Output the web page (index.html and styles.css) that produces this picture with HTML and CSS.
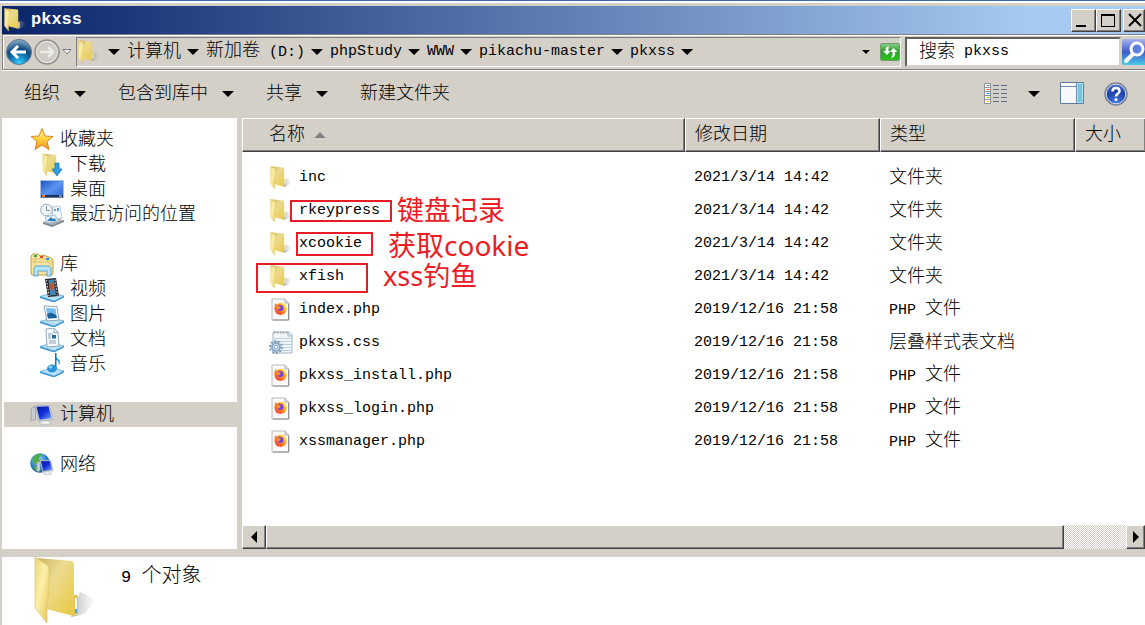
FILE: index.html
```
<!DOCTYPE html>
<html lang="zh-CN">
<head>
    <meta charset="UTF-8">
    <meta name="viewport" content="width=device-width, initial-scale=1.0">
    <title>pkxss</title>
    <link rel="stylesheet" href="styles.css">
</head>
<body>
    <!-- icons used more than once -->
    <svg class="defs" aria-hidden="true">
        <defs>
            <linearGradient id="g-front" x1="0" x2="1" y1="0" y2="1">
                <stop offset="0" stop-color="#eed67a"/><stop offset=".45" stop-color="#fcf0a8"/><stop offset="1" stop-color="#e3c04c"/>
            </linearGradient>
            <linearGradient id="g-back" x1="0" x2="1" y1="0" y2="1">
                <stop offset="0" stop-color="#cbb162"/><stop offset=".4" stop-color="#ecdb90"/><stop offset="1" stop-color="#e8c840"/>
            </linearGradient>
            <linearGradient id="g-shadow">
                <stop offset="0" stop-color="#888" stop-opacity=".6"/><stop offset="1" stop-color="#bbb" stop-opacity="0"/>
            </linearGradient>
            <linearGradient id="g-screen" x1="0" x2="1" y1="0" y2="1">
                <stop offset="0" stop-color="#0a1a9c"/><stop offset=".5" stop-color="#1030d8"/><stop offset="1" stop-color="#7fa8f8"/>
            </linearGradient>
            <linearGradient id="g-desk" x1="0" x2="1" y1="0" y2="1">
                <stop offset="0" stop-color="#1c50c0"/><stop offset=".5" stop-color="#5a94ee"/><stop offset="1" stop-color="#2a62cf"/>
            </linearGradient>
            <linearGradient id="g-star" x1="0" x2="0" y1="0" y2="1">
                <stop offset="0" stop-color="#fff0a0"/><stop offset=".5" stop-color="#ffd23e"/><stop offset="1" stop-color="#f58a1c"/>
            </linearGradient>
            <linearGradient id="g-fox" x1="1" x2="0" y1="0" y2="1">
                <stop offset="0" stop-color="#ffe03a"/><stop offset=".5" stop-color="#ff8a1e"/><stop offset="1" stop-color="#f0264e"/>
            </linearGradient>
            <radialGradient id="g-back-btn" cx=".5" cy=".95" r=".9">
                <stop offset="0" stop-color="#2fd4ff"/><stop offset=".4" stop-color="#1178b4"/><stop offset=".65" stop-color="#0f4a80"/><stop offset="1" stop-color="#7fa4c4"/>
            </radialGradient>
            <linearGradient id="g-refresh" x1="0" x2="0" y1="0" y2="1">
                <stop offset="0" stop-color="#8fd28a"/><stop offset=".45" stop-color="#2f9e2e"/><stop offset="1" stop-color="#2cc41c"/>
            </linearGradient>
            <linearGradient id="g-find" x1="0" x2="0" y1="0" y2="1">
                <stop offset="0" stop-color="#a8b4ee"/><stop offset=".5" stop-color="#3c5cc8"/><stop offset="1" stop-color="#4cc8e8"/>
            </linearGradient>
            <radialGradient id="g-globe" cx=".4" cy=".3" r=".8">
                <stop offset="0" stop-color="#a8dcf0"/><stop offset=".5" stop-color="#2f86cc"/><stop offset="1" stop-color="#0c3c8c"/>
            </radialGradient>
            <radialGradient id="g-help" cx=".5" cy=".9" r=".9">
                <stop offset="0" stop-color="#4a7ee0"/><stop offset=".6" stop-color="#1b3fa8"/><stop offset="1" stop-color="#5a7ccc"/>
            </radialGradient>
            <symbol id="i-folder" viewBox="0 0 64 68">
                <path d="M38 60 47 35 64 43 52 56 44 59z" fill="url(#g-shadow)"/>
                <path d="M4 1 39 4Q41 5 41 7V59L13 52z" fill="url(#g-back)"/>
                <path d="M41 38h3q1 0 1 2v16l-4 3z" fill="#e2c655"/>
                <path d="M42 41h2v14h-2z" fill="#f6faff"/>
                <path d="M42 52h2v4h-2z" fill="#5aa0e8"/>
                <path d="M2 0 14 8Q16 9 16 11V39L14 42V66L3 52Q2 51 2 49z" fill="url(#g-front)" stroke="#dabf62" stroke-width=".6"/>
            </symbol>
            <symbol id="i-php" viewBox="1 1 24 24">
                <path d="M4 2h13l4 4v17H4z" fill="#fafafa" stroke="#b8b8b8"/>
                <path d="M20.500 7v16H5" fill="none" stroke="#8f8f8f"/>
                <path d="M17 2v4h4" fill="#e4e4e4" stroke="#b0b0b0"/>
                <circle cx="12.500" cy="12" r="6" fill="url(#g-fox)"/>
                <path d="M6.500 12 7 6 9.500 8.500 12 6.500 12 9z" fill="#ff7a24"/>
                <path d="M14 5.500Q19 8 18.500 13L16 10z" fill="#ffd83a"/>
                <circle cx="12.500" cy="11" r="3" fill="#7542d8"/>
                <path d="M9 9 13 9.500 11.500 12 9.500 12.500z" fill="#ff9a2a"/>
            </symbol>
            <symbol id="i-tray" viewBox="0 0 24 24">
                <path d="M0 18.500 12 15 24 18 14 23z" fill="#b9e2f8" stroke="#5fabda" stroke-width=".8"/>
                <path d="M0 18.500V20L14 24.500 24 19.500V18L14 23z" fill="#3a95d2"/>
            </symbol>
            <symbol id="i-pc" viewBox="1 2 22 22">
                <path d="M2 7 6 5v12l-4 1z" fill="#c8ccd2" stroke="#8c9098" stroke-width=".6"/>
                <ellipse cx="15" cy="20" rx="5" ry="2" fill="#eceef0" stroke="#a4a8ae" stroke-width=".6"/>
                <path d="M6 4.500 19 4 22 17 9 18.500z" fill="#dfe3e8" stroke="#9ba1aa" stroke-width=".6"/>
                <path d="M7 5.500 18 5 20.800 16 9.800 17.300z" fill="url(#g-screen)"/>
            </symbol>
        </defs>
    </svg>

    <div class="window">
        <header class="titlebar">
            <svg class="icon"><use href="#i-folder"/></svg>
            <h1>pkxss</h1>
            <div class="window-buttons">
                <button class="win-btn" aria-label="最小化">
                    <svg viewBox="0 0 20 18"><path d="M3 14h10v2H3z"/></svg>
                </button>
                <button class="win-btn" aria-label="最大化">
                    <svg viewBox="0 0 20 18"><path d="M3 3h14v13H3zM4 5v10h12V5z" fill-rule="evenodd"/></svg>
                </button>
                <button class="win-btn close" aria-label="关闭">
                    <svg viewBox="0 0 20 18"><path d="M4 3 16 15M16 3 4 15" stroke="#000" stroke-width="2"/></svg>
                </button>
            </div>
        </header>

        <nav class="navbar">
            <div class="travel">
                <button aria-label="后退">
                    <svg viewBox="0 0 26 26"><circle cx="13" cy="13" r="12.500" fill="url(#g-back-btn)" stroke="#5c7488"/><path d="M12 7 6 13l6 6M6.500 13H20" fill="none" stroke="#fff" stroke-width="3"/></svg>
                </button>
                <button aria-label="前进">
                    <svg viewBox="0 0 26 26"><circle cx="13" cy="13" r="12" fill="#cfccc6" stroke="#8d8d8d" stroke-width="1.500"/><circle cx="13" cy="13" r="10.500" fill="none" stroke="#e8e6e2"/><path d="M14 8l5 5-5 5M19 13H6" fill="none" stroke="#eeece8" stroke-width="2.500"/></svg>
                </button>
                <button class="recent" aria-label="最近浏览">
                    <svg viewBox="0 0 10 8"><path d="M1 1.500h8L5 6z" fill="#fff" stroke="#777"/></svg>
                </button>
            </div>
            <div class="address">
                <svg class="icon"><use href="#i-folder"/></svg>
                <button class="arrow" aria-label="展开"></button>
                <a href="#" class="zh">计算机</a>
                <button class="arrow" aria-label="展开"></button>
                <a href="#" class="zh">新加卷<span class="en"> (D:)</span></a>
                <button class="arrow" aria-label="展开"></button>
                <a href="#">phpStudy</a>
                <button class="arrow" aria-label="展开"></button>
                <a href="#">WWW</a>
                <button class="arrow" aria-label="展开"></button>
                <a href="#">pikachu-master</a>
                <button class="arrow" aria-label="展开"></button>
                <a href="#">pkxss</a>
                <button class="arrow" aria-label="展开"></button>
                <button class="arrow small history" aria-label="历史记录"></button>
                <button class="refresh" aria-label="刷新">
                    <svg viewBox="0 0 20 18"><rect x=".5" y=".5" width="19" height="17" rx="1.500" fill="url(#g-refresh)" stroke="#6f9a70"/><path d="M9 3Q5 4 5.500 8H3l4 4 3.500-4H8.500Q8 5 9 3zM11 15q5-1 4-6h2.500L13.500 5 10 9h2.500q.5 4-1.500 6z" fill="#fff"/></svg>
                </button>
            </div>
            <label class="search">
                <span class="zh">搜索</span>
                <input type="text" value="pkxss">
            </label>
            <button class="find" aria-label="搜索">
                <svg viewBox="0 0 26 26"><rect width="26" height="26" rx="2" fill="url(#g-find)"/><path d="M11 15 4 22" stroke="#fff" stroke-width="4" stroke-linecap="round"/><circle cx="15" cy="10" r="6" fill="#5a80dc" stroke="#fff" stroke-width="3"/></svg>
            </button>
        </nav>

        <div class="toolbar zh">
            <button class="tool">组织<span class="arrow"></span></button>
            <button class="tool">包含到库中<span class="arrow"></span></button>
            <button class="tool">共享<span class="arrow"></span></button>
            <button class="tool">新建文件夹</button>
            <div class="view-tools">
                <button aria-label="更改视图">
                    <svg class="icon" viewBox="0 0 24 24">
                        <path d="M.5 1.500h6v20h-6zM.5 5.500h6M.5 9.500h6M.5 13.500h6M.5 17.500h6" fill="#fff" stroke="#8b919c"/>
                        <path d="M2.500 3.500h3" stroke="#4e9a58"/><path d="M2.500 7.500h3" stroke="#e04040"/><path d="M2.500 11.500h3" stroke="#3a90e0"/><path d="M2.500 15.500h3" stroke="#8cc030"/><path d="M2.500 19.500h3" stroke="#f0c020"/>
                        <path d="M9 3.500h6M17 3.500h6M9 7.500h6M17 7.500h6M9 11.500h6M17 11.500h6M9 15.500h6M17 15.500h6M9 19.500h6M17 19.500h6" stroke="#5a6e92"/>
                    </svg>
                </button>
                <button class="arrow" aria-label="更多选项"></button>
                <button aria-label="预览窗格">
                    <svg class="icon" viewBox="0 0 24 24"><path d="M.5 .5h23v21H.5z" fill="#f7f8fb" stroke="#5c7ca4"/><path d="M1 4.500h15M16.500 1v20" stroke="#6b89b0"/><path d="M17.500 1.500h5v19h-5z" fill="#79c3dc" stroke="#a8e6f4"/></svg>
                </button>
                <button aria-label="帮助">
                    <svg class="icon" viewBox="0 0 24 24"><circle cx="12" cy="12" r="11" fill="url(#g-help)" stroke="#7d8794" stroke-width="1.500"/><circle cx="12" cy="12" r="9.800" fill="none" stroke="#d5dcec"/><path d="M8.500 9.500Q8.500 6 12 6t3.500 3q0 2-2 3-1.500 1-1.500 2.500" fill="none" stroke="#fff" stroke-width="2.500"/><circle cx="12" cy="17.500" r="1.500" fill="#fff"/></svg>
                </button>
            </div>
        </div>

        <div class="panes">
            <aside class="sidebar zh">
                <ul>
                    <li><svg class="icon" viewBox="0 0 24 24"><path d="M12 .5 15 8 23 8.500 17 13.500 19 21.500 12 17 5 21.500 7 13.500 1 8.500 9 8z" fill="url(#g-star)" stroke="#dc8524" stroke-linejoin="round"/></svg>收藏夹</li>
                    <li class="sub"><svg class="icon" viewBox="0 0 24 24"><use href="#i-folder" x="2" width="22" height="24"/><path d="M15 10h4v6h3l-5 7-5-7h3z" fill="#2f9de4" stroke="#1b6cb4" stroke-width=".7"/></svg>下载</li>
                    <li class="sub"><svg class="icon" viewBox="0 0 24 24"><path d="M.5 2.500h23v17H.5z" fill="url(#g-desk)" stroke="#a9bfdf"/><path d="M1 17h22v2.500H1z" fill="#1b3358"/><path d="M2 17h3v2H2z" fill="#f08030"/><path d="M19 18h3" stroke="#d0e0f4"/></svg>桌面</li>
                    <li class="sub"><svg class="icon" viewBox="0 0 24 24"><path d="M3 19 17 14 24 18 12 24z" fill="#b2b7bd"/><path d="M3 19 12 22 24 17V19L12 24 3 21z" fill="#858b93"/><path d="M12 4 20 3 22 15 13 17z" fill="#f4f8fc" stroke="#a2b4c6" stroke-width=".7"/><path d="M17 5h2v3h-2zM14 6h2v2h-2z" fill="#4ca0e0"/><path d="M5 14 15 12 18 18 7 20z" fill="#e6f2fc" stroke="#8eaac4" stroke-width=".7"/><path d="M7 18 11 14 13 16 15 15 16 18z" fill="#2a7cc0"/><circle cx="6.500" cy="7" r="5.800" fill="#eef3f7" stroke="#99a8b4"/><path d="M6.500 3v4.500H10" fill="none" stroke="#8292a0"/></svg>最近访问的位置</li>
                </ul>
                <ul>
                    <li><svg class="icon" viewBox="0 0 24 24"><path d="M1 3 3 1h5l2 2 3-1 3 1 5 2 2 2v13q0 2-2 2H3q-2 0-2-2z" fill="#f7e6a0" stroke="#bf9d40"/><path d="M1 6h15l2 2h5M1 9h17l1 2h4M5 3v18" fill="none" stroke="#dcc070"/><path d="M4 2h3v2H4z" fill="#38a048"/><path d="M10 3h3v2h-3z" fill="#e04828"/><path d="M16 5h3v2h-3z" fill="#3a8ed8"/><path d="M4 23V15l2-2h13l2 2v8h-4v-5H8v5z" fill="#b9e4f8" stroke="#5aa4cc"/></svg>库</li>
                    <li class="sub"><svg class="icon" viewBox="0 0 24 24"><use href="#i-tray"/><path d="M5 1 16 0 19 18 8 19z" fill="#22262c"/><path d="M8.500 2 14 1.500 16 17 10 17.500z" fill="#4388b4"/><path d="M9 7 13 4 15 10 11 13z" fill="#b65a38"/><path d="M6.500 2 9 18M15 1.500 17.500 17.500" stroke="#dfe4e8" stroke-dasharray="1.500 1.500"/></svg>视频</li>
                    <li class="sub"><svg class="icon" viewBox="0 0 24 24"><use href="#i-tray"/><path d="M4 3 17 3.500 19 17 7 18z" fill="#fff" stroke="#8399ac" stroke-width=".9"/><path d="M6 5 15.500 5.500 17 15 8 15.500z" fill="#72bdec"/><path d="M7 11 11 9.500 16 12 17 15 8 15.500z" fill="#1d6099"/></svg>图片</li>
                    <li class="sub"><svg class="icon" viewBox="0 0 24 24"><use href="#i-tray"/><path d="M6 1 14 0 18 4 19 18 7 19z" fill="#f6fafe" stroke="#8da0b3" stroke-width=".9"/><path d="M14 0v4.500h4M8 6h5M8 8h3M8 10h3M9 13h7M9 15h7" fill="none" stroke="#8aa4c2"/><path d="M12 7h4v3.500h-4z" fill="#1e6da4"/></svg>文档</li>
                    <li class="sub"><svg class="icon" viewBox="0 0 24 24"><use href="#i-tray"/><path d="M15 0Q15 4 19 6.500 21 9 19 12 18.500 7 16 7V15" fill="#3b9ede"/><path d="M15 0h1.500v16H15z" fill="#1f70b4"/><ellipse cx="12" cy="15.500" rx="5" ry="4" fill="#2c92da"/><ellipse cx="10.500" cy="14" rx="2" ry="1.500" fill="#8fd2f8"/></svg>音乐</li>
                </ul>
                <ul>
                    <li class="selected"><svg class="icon"><use href="#i-pc"/></svg>计算机</li>
                </ul>
                <ul>
                    <li><svg class="icon" viewBox="0 0 24 24"><circle cx="10" cy="10" r="9.800" fill="url(#g-globe)"/><path d="M2 6Q6 0 12 1L9 5 10 9 5 12zM3 13 8 14 10 19Q4 18 3 13z" fill="#4fae4a"/><use href="#i-pc" x="6" y="5" width="18" height="19"/></svg>网络</li>
                </ul>
            </aside>

            <main class="files">
                <table>
                    <colgroup>
                        <col class="col-name">
                        <col class="col-date">
                        <col class="col-type">
                        <col>
                    </colgroup>
                    <thead>
                        <tr class="zh">
                            <th class="name-head">名称<span class="sort"></span></th>
                            <th>修改日期</th>
                            <th>类型</th>
                            <th>大小</th>
                        </tr>
                    </thead>
                    <tbody>
                        <tr>
                            <td class="name"><svg class="icon"><use href="#i-folder"/></svg>inc</td>
                            <td>2021/3/14 14:42</td>
                            <td class="zh">文件夹</td>
                            <td></td>
                        </tr>
                        <tr>
                            <td class="name"><svg class="icon"><use href="#i-folder"/></svg>rkeypress</td>
                            <td>2021/3/14 14:42</td>
                            <td class="zh">文件夹</td>
                            <td></td>
                        </tr>
                        <tr>
                            <td class="name"><svg class="icon"><use href="#i-folder"/></svg>xcookie</td>
                            <td>2021/3/14 14:42</td>
                            <td class="zh">文件夹</td>
                            <td></td>
                        </tr>
                        <tr>
                            <td class="name"><svg class="icon"><use href="#i-folder"/></svg>xfish</td>
                            <td>2021/3/14 14:42</td>
                            <td class="zh">文件夹</td>
                            <td></td>
                        </tr>
                        <tr>
                            <td class="name"><svg class="icon"><use href="#i-php"/></svg>index.php</td>
                            <td>2019/12/16 21:58</td>
                            <td class="zh"><span class="en">PHP </span>文件</td>
                            <td></td>
                        </tr>
                        <tr>
                            <td class="name"><svg class="icon" viewBox="0 0 24 24"><path d="M4 1h16l3 3v18H4z" fill="#f3f6f9" stroke="#a8b2bc"/><path d="M5 1.500h14" stroke="#9aa2aa" stroke-dasharray="1.500 1.500" stroke-width="2"/><path d="M5 7.500h17M5 10.500h17M5 13.500h17M5 16.500h17M5 19.500h17" stroke="#b9cfe0"/><path d="M19 1v4h4" fill="#dbe2e8" stroke="#a8b2bc"/><circle cx="7" cy="16" r="6" fill="none" stroke="#7f9db8" stroke-width="2" stroke-dasharray="2 1.700"/><circle cx="7" cy="16" r="4" fill="#d8e8f4" stroke="#86a8c4" stroke-width="2"/><circle cx="7" cy="16" r="1.800" fill="#fff" stroke="#86a8c4"/></svg>pkxss.css</td>
                            <td>2019/12/16 21:58</td>
                            <td class="zh">层叠样式表文档</td>
                            <td></td>
                        </tr>
                        <tr>
                            <td class="name"><svg class="icon"><use href="#i-php"/></svg>pkxss_install.php</td>
                            <td>2019/12/16 21:58</td>
                            <td class="zh"><span class="en">PHP </span>文件</td>
                            <td></td>
                        </tr>
                        <tr>
                            <td class="name"><svg class="icon"><use href="#i-php"/></svg>pkxss_login.php</td>
                            <td>2019/12/16 21:58</td>
                            <td class="zh"><span class="en">PHP </span>文件</td>
                            <td></td>
                        </tr>
                        <tr>
                            <td class="name"><svg class="icon"><use href="#i-php"/></svg>xssmanager.php</td>
                            <td>2019/12/16 21:58</td>
                            <td class="zh"><span class="en">PHP </span>文件</td>
                            <td></td>
                        </tr>
                    </tbody>
                </table>

                <!-- red marks drawn over the list -->
                <div class="mark mark-key"></div>
                <div class="mark mark-cookie"></div>
                <div class="mark mark-fish"></div>
                <p class="note note-key">键盘记录</p>
                <p class="note note-cookie">获取cookie</p>
                <p class="note note-fish">xss钓鱼</p>

                <div class="scrollbar">
                    <button class="scroll-btn" aria-label="向左"><svg viewBox="0 0 8 12"><path d="M7 0v12L1 6z"/></svg></button>
                    <div class="thumb"></div>
                    <div class="track"></div>
                    <button class="scroll-btn" aria-label="向右"><svg viewBox="0 0 8 12"><path d="M1 0v12l6-6z"/></svg></button>
                </div>
            </main>
        </div>

        <footer class="details">
            <svg class="big-folder"><use href="#i-folder"/></svg>
            <p><span class="count">9 </span>个对象</p>
        </footer>
    </div>
</body>
</html>
```

FILE: styles.css
```
* {
    box-sizing: border-box;
}

body {
    margin: 0;
    background: #d4d0c8;
    color: #000;
    font-family: "Liberation Mono", "Noto Sans CJK SC", monospace;
    font-size: 15px;
    line-height: 24px;
    overflow: hidden;
}

button {
    padding: 0;
    border: 0;
    background: none;
    color: inherit;
    font: inherit;
    flex: none;
}

svg {
    display: block;
}

a {
    color: inherit;
    text-decoration: none;
}

.defs {
    position: absolute;
    width: 0;
    height: 0;
}

/* Chinese text is larger than the latin text beside it */
.zh {
    font-size: 18px;
    font-weight: 300;
}

.en {
    font-size: 15px;
    white-space: pre;
}

.icon {
    width: 24px;
    height: 24px;
    flex: none;
}

.arrow {
    width: 12px;
    height: 6px;
    background: #000;
    clip-path: polygon(0 0, 100% 0, 50% 100%);
}

.arrow.small {
    width: 8px;
    height: 4px;
}

.window {
    display: flex;
    flex-direction: column;
    min-height: 100vh;
    border-top: 1px solid #3b68a9;
    padding-left: 2px;
    box-shadow: inset 0 2px #fff;
}

/* title bar */
.titlebar {
    display: flex;
    align-items: center;
    height: 28px;
    margin-top: 5px;
    padding-left: 1px;
    background: linear-gradient(to right, #0a246a, #a6caf0 90%);
    color: #fff;
}

.titlebar h1 {
    margin: 0 auto 0 4px;
    font-size: 17px;
}

.window-buttons {
    display: flex;
}

.win-btn {
    width: 25px;
    height: 23px;
    padding: 1px;
    background: #d4d0c8;
    border: 1px solid;
    border-color: #fff #404040 #404040 #fff;
    box-shadow: inset -1px -1px #808080;
}

.win-btn.close {
    margin-left: 2px;
    width: 22px;
}

.win-btn svg {
    width: 20px;
    height: 18px;
}

/* address row */
.navbar {
    display: flex;
    align-items: center;
    height: 36px;
    border: 1px solid #808080;
    border-right: 0;
    box-shadow: inset 1px 1px #fff, 0 1px #fff;
}

.travel {
    display: flex;
    align-items: center;
    gap: 2px;
    width: 73px;
    padding-left: 3px;
}

.travel svg {
    width: 26px;
    height: 26px;
}

.travel .recent svg {
    width: 10px;
    height: 8px;
}

.address {
    display: flex;
    flex: 1;
    align-items: center;
    gap: 6px;
    height: 30px;
    border: 1px solid;
    border-color: #808080 #fff #fff #808080;
    white-space: nowrap;
}

.address .icon {
    margin-right: 1px;
}

.address a {
    margin-left: 1px;
}

.address .history {
    margin-left: auto;
    margin-right: 4px;
}

.refresh svg {
    width: 20px;
    height: 18px;
}

.search {
    display: flex;
    align-items: center;
    gap: 9px;
    width: 216px;
    height: 30px;
    margin: 0 1px 0 4px;
    padding-left: 12px;
    background: #fff;
    border: 2px solid;
    border-color: #606060 #d4d0c8 #d4d0c8 #606060;
}

.search input {
    width: 120px;
    padding: 0;
    border: 0;
    outline: 0;
    font: inherit;
}

.find {
    width: 23px;
    overflow: hidden;
}

.find svg {
    width: 26px;
    height: 26px;
}

/* command bar */
.toolbar {
    display: flex;
    align-items: center;
    gap: 32px;
    height: 48px;
    padding: 0 17px 0 22px;
}

.tool {
    display: flex;
    align-items: center;
    gap: 14px;
}

.view-tools {
    display: flex;
    align-items: center;
    gap: 20px;
    margin-left: auto;
}

/* tree on the left, list on the right */
.panes {
    display: flex;
    flex: 1;
}

.sidebar {
    width: 235px;
    padding: 9px 0 0 2px;
    background: #fff;
}

.sidebar ul {
    margin: 0 0 25px;
    padding: 0;
    list-style: none;
}

.sidebar li {
    display: flex;
    align-items: center;
    gap: 6px;
    height: 25px;
    padding-left: 26px;
}

.sidebar li.sub {
    padding-left: 36px;
}

.sidebar li.selected {
    background: #d4d0c8;
}

.files {
    position: relative;
    display: flex;
    flex: 1;
    flex-direction: column;
    margin-left: 5px;
    background: #fff;
}

table {
    width: 100%;
    table-layout: fixed;
    border-spacing: 0;
}

.col-name {
    width: 443px;
}

.col-date,
.col-type {
    width: 195px;
}

th {
    height: 34px;
    padding: 0 9px;
    background: #d4d0c8;
    border: 1px solid;
    border-color: #fff #404040 #404040 #fff;
    box-shadow: inset -1px -1px #808080;
    font-weight: inherit;
    text-align: left;
    white-space: nowrap;
}

th:last-child {
    border-right: 0;
}

th.name-head {
    padding-left: 26px;
}

.sort {
    display: inline-block;
    width: 12px;
    height: 6px;
    margin-left: 9px;
    background: #808080;
    clip-path: polygon(50% 0, 100% 100%, 0 100%);
    vertical-align: middle;
}

tbody::before {
    content: "";
    display: block;
    height: 9px;
}

td {
    height: 33px;
    padding: 0 9px;
    white-space: nowrap;
}

td.name {
    display: flex;
    align-items: center;
    gap: 6px;
    padding-left: 27px;
}

.mark {
    position: absolute;
    border: 2px solid #e81c24;
}

.mark-key {
    left: 48px;
    top: 82px;
    width: 102px;
    height: 22px;
}

.mark-cookie {
    left: 54px;
    top: 114px;
    width: 77px;
    height: 24px;
}

.mark-fish {
    left: 14px;
    top: 145px;
    width: 112px;
    height: 30px;
}

.note {
    position: absolute;
    margin: 0;
    color: #ed1c24;
    font-family: "Noto Sans", "Noto Sans CJK SC", sans-serif;
    font-size: 27px;
    line-height: 28px;
}

.note-key {
    left: 155px;
    top: 78px;
}

.note-cookie {
    left: 146px;
    top: 113px;
    font-size: 28px;
}

.note-fish {
    left: 141px;
    top: 144px;
}

.scrollbar {
    display: grid;
    grid-template-columns: 24px 1fr 62px 19px;
    height: 24px;
    margin-top: auto;
    overflow: hidden;
}

.scroll-btn,
.thumb {
    background: #d4d0c8;
    border: 1px solid;
    border-color: #fff #404040 #404040 #fff;
    box-shadow: inset -1px -1px #808080;
}

.scroll-btn svg {
    width: 8px;
    height: 12px;
    margin: 0 auto;
}

.track {
    background: repeating-conic-gradient(#fff 0 25%, #d4d0c8 0 50%) 0 0 / 2px 2px;
}

/* details pane */
.details {
    display: flex;
    height: 68px;
    margin-top: 8px;
    padding-left: 31px;
    background: #fff;
    font-size: 20px;
    font-weight: 300;
}

.big-folder {
    width: 64px;
    height: 68px;
}

.details p {
    margin: 8px 0 0 24px;
}

.count {
    font-size: 17px;
}
```
